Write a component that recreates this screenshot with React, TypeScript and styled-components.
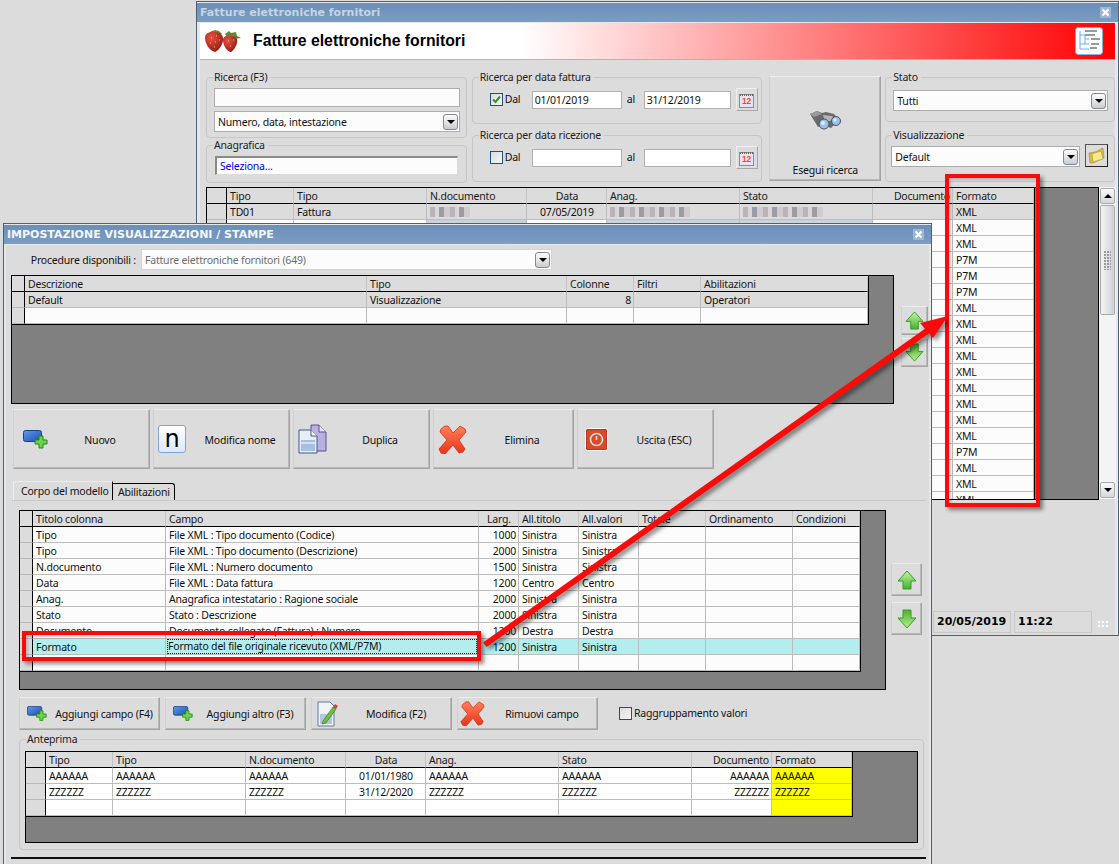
import React from "react";
import styled, { createGlobalStyle } from "styled-components";

const UI_FONT = `"Noto Sans", "Liberation Sans", Arial, sans-serif`;

const GlobalStyle = createGlobalStyle`
  html, body { margin: 0; padding: 0; overflow: hidden; background: #dcdcdc; }
  * { box-sizing: border-box; }
  body { font: 10.5px/15px ${UI_FONT}; letter-spacing: -0.2px; color: #111; }
`;

/* desktop and windows */
const Desktop = styled.div`
  position: relative;
  width: 1119px;
  height: 864px;
  overflow: hidden;
  background: #dcdcdc;
`;

const AppWindow = styled.section<{ $left: number; $top: number; $width: number; $height: number }>`
  position: absolute;
  left: ${(p) => p.$left}px;
  top: ${(p) => p.$top}px;
  width: ${(p) => p.$width}px;
  height: ${(p) => p.$height}px;
  display: flex;
  flex-direction: column;
  background: #e3e8ec;
  border: 1px solid #4f6073;
`;

const TitleBar = styled.header`
  flex: none;
  margin-top: 1px;
  height: 19px;
  padding: 0 7px 0 3px;
  display: flex;
  align-items: center;
  justify-content: space-between;
  background: linear-gradient(180deg, #6a8fb9, #7b9dc2);
`;

const TitleText = styled.span<{ $bright?: boolean }>`
  font: bold 11px/19px "DejaVu Sans", "Liberation Sans", sans-serif;
  letter-spacing: 0;
  color: ${(p) => (p.$bright ? "#f4f7fa" : "#c6d4e2")};
`;

const CloseBox = styled.span`
  width: 11px;
  height: 11px;
  display: flex;
  align-items: center;
  justify-content: center;
  background: #9db6d2;
`;

const WindowBody = styled.div<{ $inset: number }>`
  flex: 1;
  min-height: 0;
  margin: 1px ${(p) => p.$inset}px 0;
  display: flex;
  flex-direction: column;
  background: #dcdcdc;
`;

/* banner of the back window */
const Banner = styled.div`
  flex: none;
  height: 37px;
  padding: 0 12px 0 5px;
  display: flex;
  align-items: center;
  background: linear-gradient(90deg, #fff 0, #fff 35%, #f00 100%);
  border-bottom: 1px solid #b4b4b4;
`;

const BannerTitle = styled.h1`
  margin: 0 0 0 11px;
  flex: 1;
  font: bold 15.8px/20px "Liberation Sans", Arial, sans-serif;
  letter-spacing: 0;
  color: #000;
`;

/* filters */
const Filters = styled.div`
  flex: none;
  margin-top: 10px;
  padding-left: 6px;
  display: flex;
`;

const FilterColumn = styled.div<{ $width: number; $gap?: number; $after?: number }>`
  width: ${(p) => p.$width}px;
  margin-right: ${(p) => p.$after ?? 0}px;
  display: flex;
  flex-direction: column;
  gap: ${(p) => p.$gap ?? 0}px;
`;

const Group = styled.fieldset<{ $h: number }>`
  margin: 0;
  padding: 0;
  min-width: 0;
  height: ${(p) => p.$h}px;
  border: 1px solid #c6c6c6;
  border-radius: 4px;
`;

const GroupLabel = styled.legend`
  margin-left: 6px;
  padding: 0 3px 0 1px;
  line-height: 14px;
  color: #222;
`;

const GroupBody = styled.div<{ $pad: string }>`
  padding: ${(p) => p.$pad};
`;

const TextBox = styled.div<{ $w: number; $h: number; $sunken?: boolean; $blue?: boolean }>`
  width: ${(p) => p.$w}px;
  height: ${(p) => p.$h}px;
  padding: 0 3px;
  line-height: ${(p) => p.$h - 2}px;
  background: #fcfcfc;
  border: 1px solid #adadad;
  color: ${(p) => (p.$blue ? "#0000ee" : "#111")};
  ${(p) => p.$sunken && "border-color: #8a8a8a #dcdcdc #dcdcdc #8a8a8a; border-width: 2px 1px 1px 2px;"}
`;

const Combo = styled.div<{ $w: number; $h: number; $muted?: boolean; $top?: number }>`
  width: ${(p) => p.$w}px;
  height: ${(p) => p.$h}px;
  margin-top: ${(p) => p.$top ?? 0}px;
  padding: 2px 1px 0 3px;
  display: flex;
  align-items: center;
  justify-content: space-between;
  background: #fcfcfc;
  border: 1px solid ${(p) => (p.$muted ? "#d4d4cc" : "#adadad")};
  color: ${(p) => (p.$muted ? "#6c6c6c" : "#111")};
`;

const DropButton = styled.span`
  width: 15px;
  height: 16px;
  margin-top: -2px;
  display: flex;
  align-items: center;
  justify-content: center;
  border: 1px solid #7f8a94;
  border-radius: 3px;
  background: linear-gradient(180deg, #fdfdfd, #c9ccd2);
  &::after {
    content: "";
    border: 4px solid transparent;
    border-top: 4px solid #000;
    border-bottom: 0;
  }
`;

const DateRow = styled.div`
  padding-left: 17px;
  display: flex;
  align-items: center;
  height: 23px;
`;

const CheckBox = styled.span<{ $left?: number }>`
  flex: none;
  width: 13px;
  height: 13px;
  margin-left: ${(p) => p.$left ?? 0}px;
  display: flex;
  align-items: center;
  justify-content: center;
  border: 1px solid #1c5180;
  background: linear-gradient(135deg, #dcdcdc, #f6f6f6);
`;

const Inline = styled.span<{ $w?: number; $pad?: number }>`
  width: ${(p) => (p.$w ? `${p.$w}px` : "auto")};
  padding-left: ${(p) => p.$pad ?? 0}px;
  white-space: nowrap;
`;

const DateBox = styled.div<{ $w: number }>`
  width: ${(p) => p.$w}px;
  height: 18px;
  padding: 0 2px;
  line-height: 16px;
  background: #fff;
  border: 1px solid #b0b0b0;
`;

const CalendarButton = styled.span`
  width: 22px;
  height: 23px;
  margin-left: 5px;
  display: flex;
  align-items: center;
  justify-content: center;
  background: #dcdcdc;
  border: 1px solid;
  border-color: #eee #a8a8a8 #a8a8a8 #eee;
`;

const Raised = styled.button`
  padding: 0;
  font: inherit;
  letter-spacing: inherit;
  color: #111;
  background: #dcdcdc;
  border: 1px solid;
  border-color: #ececec #a4a4a4 #a4a4a4 #d0d0d0;
  box-shadow: inset -1px -1px 0 #b8b8b8;
`;

const SearchButton = styled(Raised)`
  width: 112px;
  height: 105px;
  margin: 6px 4px 0 0;
  padding: 33px 0 2px;
  display: flex;
  flex-direction: column;
  align-items: center;
  justify-content: space-between;
`;

const FolderButton = styled.span`
  width: 23px;
  height: 23px;
  display: flex;
  align-items: center;
  justify-content: center;
  background: #dcdcdc;
  border: 1px solid;
  border-color: #555 #222 #222 #555;
`;

const ComboRow = styled.div`
  display: flex;
  align-items: flex-end;
  gap: 5px;
  padding-top: 2px;
`;

/* grids */
const GridArea = styled.div<{ $indent: number; $top: number }>`
  flex: none;
  margin: ${(p) => p.$top}px 0 0 ${(p) => p.$indent}px;
  display: flex;
  align-items: flex-start;
`;

const GridFrame = styled.div<{ $w: number; $h: number }>`
  flex: none;
  width: ${(p) => p.$w}px;
  height: ${(p) => p.$h}px;
  overflow: hidden;
  background: #808080;
  border: 1px solid #000;
`;

const GridSheet = styled.div`
  width: fit-content;
  border-right: 1px solid #000;
  border-bottom: 1px solid #000;
`;

const GridLine = styled.div<{ $cols: string; $bg: string }>`
  display: grid;
  grid-template-columns: ${(p) => p.$cols};
  height: 16px;
  background: ${(p) => p.$bg};
`;

const Marker = styled.span<{ $head?: boolean }>`
  background: #dcdcdc;
  border-right: 1px solid #000;
  border-bottom: 1px solid ${(p) => (p.$head ? "#000" : "#b8b8b8")};
`;

const HeadCell = styled.span<{ $align?: string }>`
  padding: 0 2px 0 3px;
  overflow: hidden;
  white-space: nowrap;
  line-height: 16px;
  text-align: ${(p) => p.$align ?? "left"};
  background: #dcdcdc;
  color: #1a1a1a;
  border-right: 1px solid #c4c4c4;
  border-bottom: 1px solid #000;
`;

const Cell = styled.span<{ $align?: string; $fill?: string }>`
  padding: 0 2px 0 3px;
  overflow: hidden;
  white-space: nowrap;
  line-height: 16px;
  text-align: ${(p) => p.$align ?? "left"};
  ${(p) => p.$fill && `background: ${p.$fill};`}
  border-right: 1px solid #bcbcbc;
  border-bottom: 1px solid #bcbcbc;
`;

const FocusText = styled.span`
  display: block;
  margin: 0 -1px 0 -2px;
  padding-left: 1px;
  height: 15px;
  line-height: 15px;
  outline: 1px dotted #222;
  outline-offset: -1px;
`;

const RightNumber = styled.span`
  display: block;
  text-align: right;
`;

const Smudge = styled.span<{ $w: number }>`
  display: block;
  width: ${(p) => p.$w}px;
  height: 10px;
  margin-top: 3px;
  background: repeating-linear-gradient(90deg, #b8b4b8 0 5px, #d8d6d8 5px 9px, #9c9ca4 9px 14px, #cfcbcf 14px 20px);
`;

const SmudgeFoot = styled.span`
  display: block;
  height: 16px;
  margin: 0 -3px;
  background: #c9d3dc;
`;

/* back window scrollbar and status */
const ScrollBar = styled.div`
  flex: none;
  width: 17px;
  height: 312px;
  padding: 1px;
  display: flex;
  flex-direction: column;
  align-items: stretch;
  background: #f4f4f4;
`;

const ScrollStep = styled.span<{ $down?: boolean }>`
  flex: none;
  height: 16px;
  display: flex;
  align-items: center;
  justify-content: center;
  border: 1px solid #a8acb0;
  border-radius: 2px;
  background: linear-gradient(180deg, #fbfbfb, #d4d6da);
  margin-top: ${(p) => (p.$down ? "auto" : "0")};
  &::after {
    content: "";
    border: 4px solid transparent;
    ${(p) => (p.$down ? "border-top: 4px solid #000; border-bottom: 0;" : "border-bottom: 4px solid #000; border-top: 0;")}
  }
`;

const ScrollThumb = styled.span`
  flex: none;
  height: 110px;
  margin-top: 1px;
  display: flex;
  align-items: center;
  justify-content: center;
  border: 1px solid #a8acb0;
  border-radius: 2px;
  background: linear-gradient(90deg, #f4f4f6, #cfd1d6);
  &::after {
    content: "";
    width: 7px;
    height: 19px;
    background: radial-gradient(circle at 1px 1px, #9a9a9a 1px, transparent 1px) 0 0 / 3px 3px;
  }
`;

const StatusBar = styled.footer`
  flex: none;
  margin-top: auto;
  padding: 0 7px 2px 0;
  display: flex;
  align-items: center;
  justify-content: flex-end;
  gap: 3px;
`;

const StatusCell = styled.span`
  width: 78px;
  height: 22px;
  padding-left: 3px;
  font: bold 11px/20px "DejaVu Sans", "Liberation Sans", sans-serif;
  letter-spacing: 0;
  border: 1px solid #c8c8c8;
  color: #000;
`;

const Grip = styled.span`
  width: 10px;
  height: 8px;
  margin: 6px 0 0 3px;
  background: radial-gradient(circle at 1px 1px, #fff 1px, transparent 1px) 0 0 / 4px 4px;
`;

/* dialog */
const ProcedureRow = styled.div`
  flex: none;
  margin-top: 4px;
  display: flex;
  align-items: center;
  gap: 5px;
`;

const ProcedureLabel = styled.span`
  width: 130px;
  padding-top: 2px;
  text-align: right;
`;

const ActionRow = styled.div`
  flex: none;
  margin: 5px 0 0 7px;
  display: flex;
  gap: 3px;
`;

const ActionButton = styled(Raised)<{ $w: number; $h: number; $icon: number; $pad: number }>`
  flex: none;
  width: ${(p) => p.$w}px;
  height: ${(p) => p.$h}px;
  padding-left: ${(p) => p.$pad}px;
  display: grid;
  grid-template-columns: ${(p) => p.$icon - p.$pad}px 1fr;
  align-items: center;
  justify-items: start;
  text-align: center;
`;

const ActionLabel = styled.span`
  justify-self: center;
  padding-top: 2px;
  white-space: nowrap;
`;

const NameIcon = styled.span`
  width: 28px;
  height: 28px;
  display: flex;
  align-items: center;
  justify-content: center;
  border: 1px solid #7ea4d8;
  border-radius: 3px;
  background: linear-gradient(180deg, #fff, #dbe8fb);
  font: 24px/26px "DejaVu Sans", sans-serif;
  letter-spacing: 0;
  color: #000;
`;

const MoveStack = styled.div<{ $top: number; $left: number; $gap: number }>`
  flex: none;
  margin: ${(p) => p.$top}px 0 0 ${(p) => p.$left}px;
  display: flex;
  flex-direction: column;
  gap: ${(p) => p.$gap}px;
`;

const MoveButton = styled(Raised)<{ $w: number; $h: number }>`
  width: ${(p) => p.$w}px;
  height: ${(p) => p.$h}px;
  display: flex;
  align-items: center;
  justify-content: center;
`;

const TabStrip = styled.div`
  flex: none;
  height: 20px;
  margin: 12px 3px 0 6px;
  padding-left: 1px;
  display: flex;
  align-items: flex-end;
  border-bottom: 1px solid #c8c8cc;
`;

const Tab = styled.span<{ $active?: boolean; $w: number }>`
  width: ${(p) => p.$w}px;
  height: ${(p) => (p.$active ? 19 : 17)}px;
  padding: ${(p) => (p.$active ? "2px 0 0 7px" : "1px 0 0 5px")};
  white-space: nowrap;
  border-right: 1px solid #000;
  ${(p) =>
    p.$active
      ? "border-top: 1px solid #ececec; border-left: 1px solid #ececec; border-radius: 3px 0 0 0;"
      : "border-top: 1px solid #000; border-radius: 0 3px 0 0;"}
`;

const ToolRow = styled.div`
  flex: none;
  margin: 7px 0 0 13px;
  display: flex;
  align-items: center;
  gap: 5px;
`;

const GroupingLabel = styled.span`
  margin-left: -3px;
`;

const PreviewWrap = styled.div`
  flex: none;
  margin: 2px 0 0 13px;
  width: 905px;
`;

const DialogRule = styled.hr`
  flex: none;
  margin: 7px 3px 0 5px;
  height: 2px;
  border: 0;
  background: #111;
`;

/* annotations on top of the screenshot */
const CalloutBox = styled.div<{ $x: number; $y: number; $w: number; $h: number }>`
  position: absolute;
  left: ${(p) => p.$x}px;
  top: ${(p) => p.$y}px;
  width: ${(p) => p.$w}px;
  height: ${(p) => p.$h}px;
  border: 4px solid #fb0a0a;
  box-shadow: 3px 3px 4px rgba(0, 0, 0, 0.45), inset 2px 2px 3px rgba(0, 0, 0, 0.18);
`;

const CalloutArrow = styled.svg`
  position: absolute;
  left: 0;
  top: 0;
  filter: drop-shadow(3px 3px 2px rgba(0, 0, 0, 0.45));
`;

/* icons */
const Strawberries = () => (
  <svg width="37" height="25" viewBox="0 0 37 25">
    <defs>
      <radialGradient id="berry" cx="0.35" cy="0.3" r="0.8">
        <stop offset="0" stopColor="#e8513f" />
        <stop offset="1" stopColor="#8f1616" />
      </radialGradient>
    </defs>
    <path d="M20 5l4-3 2 2 5-1 1 4 4 2-6 1-6 1z" fill="#5d8a33" />
    <path d="M18 11c0-4 4-5 8-4 5 0 7 3 6 7-1 4-4 8-6 9-4 0-8-7-8-12z" fill="url(#berry)" />
    <path d="M5 3l5-2 4 1 3 3-5 1-6 1z" fill="#5d8a33" />
    <path d="M0 9c0-5 5-7 10-6 6 0 9 4 8 9-1 5-5 10-8 11C5 22 0 15 0 9z" fill="url(#berry)" />
    <path d="M6 9h1M11 7h1M5 14h1M10 13h1M14 11h1M9 18h1M23 12h1M28 11h1M25 17h1" stroke="#f4c070" strokeWidth="1" />
  </svg>
);

const TreeBadge = () => (
  <svg width="28" height="28" viewBox="0 0 28 28">
    <rect x="0.5" y="0.5" width="27" height="27" rx="3" fill="#fbfdff" stroke="#86b2ea" />
    <path d="M5 4v18M5 8h5v9M5 17h5M10 12h4M10 17h4M5 22h9" fill="none" stroke="#6fb0e8" />
    <path d="M10 4h12M10 8h10M16 12h9M16 17h8M15 21h7" stroke="#9a9a9a" strokeWidth="2" />
  </svg>
);

const Binoculars = () => (
  <svg width="32" height="20" viewBox="0 0 32 20">
    <path d="M1 4l7-3 5 2 4-1 8 2 5 6-8 8-9-3-4 2z" fill="#6b6b6e" />
    <path d="M1 4l7-3 5 3-8 3z" fill="#9a9a9c" />
    <path d="M14 5l9 1 3 4-10 2z" fill="#b4b4b6" />
    <circle cx="15" cy="14" r="5" fill="#9ac0ec" stroke="#4a5058" />
    <circle cx="27" cy="11" r="4.5" fill="#9ac0ec" stroke="#4a5058" />
    <circle cx="14" cy="13" r="2" fill="#dcecff" />
    <circle cx="26" cy="10" r="1.7" fill="#dcecff" />
  </svg>
);

const CalendarIcon = () => (
  <svg width="15" height="16" viewBox="0 0 15 16">
    <rect x="0.5" y="2.5" width="14" height="13" fill="#e6e4f4" stroke="#8c88a8" />
    <path d="M1 3h13" stroke="#666" strokeWidth="2" strokeDasharray="1 1" />
    <text x="7.5" y="12" textAnchor="middle" fontFamily="Liberation Sans" fontWeight="bold" fontSize="8.5" fill="#f05010">
      12
    </text>
  </svg>
);

const FolderIcon = () => (
  <svg width="17" height="17" viewBox="0 0 17 17">
    <path d="M1 6l6-1 8-4 1 10-11 5H2z" fill="#d8b848" stroke="#a88a30" strokeWidth="0.6" />
    <path d="M4 7l9-3 2 8-10 3z" fill="#fbe88a" stroke="#b09830" strokeWidth="0.6" />
  </svg>
);

const AddIcon = ({ w = 25 }: { w?: number }) => (
  <svg width={w} height={(w * 19) / 25} viewBox="0 0 25 19">
    <defs>
      <linearGradient id="addBlue" x1="0" y1="0" x2="1" y2="1">
        <stop offset="0" stopColor="#5f9ce8" />
        <stop offset="1" stopColor="#1c4cb0" />
      </linearGradient>
    </defs>
    <rect x="0.5" y="0.5" width="18" height="11" rx="2" fill="url(#addBlue)" stroke="#1c3f8a" />
    <path d="M14 6h4v4h4v4h-4v4h-4v-4h-4v-4h4z" transform="translate(2 0)" fill="#6ed24a" stroke="#1e8a14" />
  </svg>
);

const DuplicateIcon = () => (
  <svg width="29" height="30" viewBox="0 0 29 30">
    <path d="M13 1h8l7 7v19H13z" fill="#b8b0e0" stroke="#5c5090" />
    <path d="M21 1v7h7" fill="#e6e2f6" stroke="#5c5090" />
    <path d="M1 6h12l6 6v17H1z" fill="#e8eef8" stroke="#3a5a8c" />
    <path d="M13 6v6h6" fill="#fff" stroke="#3a5a8c" />
    <rect x="3" y="16" width="14" height="11" fill="#a8bfe0" />
    <path d="M3 19h14" stroke="#fff" />
  </svg>
);

const RedCross = ({ size = 29 }: { size?: number }) => (
  <svg width={size} height={size} viewBox="0 0 29 29">
    <defs>
      <linearGradient id="crossRed" x1="0" y1="0" x2="0" y2="1">
        <stop offset="0" stopColor="#ff8058" />
        <stop offset="1" stopColor="#e83418" />
      </linearGradient>
    </defs>
    <path
      d="M7 1l3 0 5 7 7-7 5 3 1 3-7 8 6 9-2 3-4 1-6-8-8 9-4-1-2-4 8-9-7-8 1-3z"
      fill="url(#crossRed)"
      stroke="#d02c14"
      strokeWidth="0.8"
    />
  </svg>
);

const PowerIcon = () => (
  <svg width="23" height="23" viewBox="0 0 23 23">
    <rect x="0.5" y="0.5" width="22" height="22" rx="2" fill="#d9492c" stroke="#fff" />
    <rect x="1.5" y="1.5" width="20" height="20" rx="1.5" fill="none" stroke="#b8341a" />
    <circle cx="11.5" cy="11.5" r="6" fill="none" stroke="#f6dcd4" strokeWidth="1.6" />
    <path d="M11.5 8v4" stroke="#f6dcd4" strokeWidth="1.6" />
  </svg>
);

const PencilDoc = () => (
  <svg width="21" height="26" viewBox="0 0 21 26">
    <path d="M1 1h12l4 4v20H1z" fill="#f0f4fa" stroke="#5a7aa6" />
    <rect x="3" y="13" width="12" height="10" fill="#b4c6e2" />
    <path d="M6 20L16 6l3 2L9 22l-4 1z" fill="#70c040" stroke="#3d7a20" strokeWidth="0.7" />
    <path d="M16 6l2-3 3 2-2 3z" fill="#e04030" />
  </svg>
);

const MoveArrow = ({ down, size }: { down?: boolean; size: number }) => (
  <svg width={size} height={size} viewBox="0 0 20 20">
    <defs>
      <linearGradient id={down ? "moveDown" : "moveUp"} x1="0" y1="0" x2="0" y2="1">
        <stop offset="0" stopColor={down ? "#50b030" : "#c4f8a0"} />
        <stop offset="1" stopColor={down ? "#b4f090" : "#44b030"} />
      </linearGradient>
    </defs>
    <path
      d={down ? "M6 1h8v8h5L10 19 1 9h5z" : "M10 1l9 10h-5v8H6v-8H1z"}
      fill={`url(#${down ? "moveDown" : "moveUp"})`}
      stroke="#3c9a28"
    />
  </svg>
);

const Tick = () => (
  <svg width="11" height="11" viewBox="0 0 11 11">
    <path d="M2 5.5l2.5 2.5L9 2.5" fill="none" stroke="#2a9a2a" strokeWidth="2" />
  </svg>
);

const CloseMark = () => (
  <svg width="9" height="9" viewBox="0 0 9 9">
    <path d="M1.5 1.5l6 6M7.5 1.5l-6 6" stroke="#fff" strokeWidth="2" />
  </svg>
);

/* data grid */
type Column = { label: string; w: number; align?: string; fill?: string };
type Row = { cells: React.ReactNode[]; bg?: string };

const DataGrid = ({ columns, marker, rows, w, h }: { columns: Column[]; marker: number; rows: Row[]; w: number; h: number }) => {
  const cols = [marker, ...columns.map((c) => c.w)].map((n) => `${n}px`).join(" ");
  return (
    <GridFrame $w={w} $h={h}>
      <GridSheet>
        <GridLine $cols={cols} $bg="#dcdcdc">
          <Marker $head />
          {columns.map((c, i) => (
            <HeadCell key={i} $align={c.align}>
              {c.label}
            </HeadCell>
          ))}
        </GridLine>
        {rows.map((row, r) => (
          <GridLine key={r} $cols={cols} $bg={row.bg ?? "#fcfcfc"}>
            <Marker />
            {columns.map((c, i) => (
              <Cell key={i} $align={c.align} $fill={c.fill}>
                {row.cells[i]}
              </Cell>
            ))}
          </GridLine>
        ))}
      </GridSheet>
    </GridFrame>
  );
};

const resultColumns: Column[] = [
  { label: "Tipo", w: 67 },
  { label: "Tipo", w: 133 },
  { label: "N.documento", w: 100 },
  { label: "Data", w: 80, align: "center" },
  { label: "Anag.", w: 133 },
  { label: "Stato", w: 133 },
  { label: "Documento", w: 80, align: "right" },
  { label: "Formato", w: 81 },
];

const formats = ["XML", "XML", "P7M", "P7M", "P7M", "XML", "XML", "XML", "XML", "XML", "XML", "XML", "XML", "XML", "P7M", "XML", "XML", "XML"];

const resultRows: Row[] = [
  {
    bg: "#dcdcdc",
    cells: ["TD01", "Fattura", <Smudge $w={40} />, "07/05/2019", <Smudge $w={80} />, <Smudge $w={80} />, "", "XML"],
  },
  ...formats.map((f, i) => ({
    cells:
      i === 0
        ? ["", "", <SmudgeFoot />, "", <SmudgeFoot />, <SmudgeFoot />, "", f]
        : ["", "", "", "", "", "", "", f],
  })),
];

const modelColumns: Column[] = [
  { label: "Descrizione", w: 342 },
  { label: "Tipo", w: 200 },
  { label: "Colonne", w: 67 },
  { label: "Filtri", w: 67 },
  { label: "Abilitazioni", w: 167 },
];

const modelRows: Row[] = [
  { bg: "#dcdcdc", cells: ["Default", "Visualizzazione", <RightNumber>8</RightNumber>, "", "Operatori"] },
  { cells: ["", "", "", "", ""] },
];

const fieldColumns: Column[] = [
  { label: "Titolo colonna", w: 133 },
  { label: "Campo", w: 313 },
  { label: "Larg.", w: 40, align: "center" },
  { label: "All.titolo", w: 60 },
  { label: "All.valori", w: 60 },
  { label: "Totale", w: 67 },
  { label: "Ordinamento", w: 87 },
  { label: "Condizioni", w: 67 },
];

const fieldRows: Row[] = [
  ...[
    ["Tipo", "File XML : Tipo documento (Codice)", "1000", "Sinistra", "Sinistra"],
    ["Tipo", "File XML : Tipo documento (Descrizione)", "2000", "Sinistra", "Sinistra"],
    ["N.documento", "File XML : Numero documento", "1500", "Sinistra", "Sinistra"],
    ["Data", "File XML : Data fattura", "1200", "Centro", "Centro"],
    ["Anag.", "Anagrafica intestatario : Ragione sociale", "2000", "Sinistra", "Sinistra"],
    ["Stato", "Stato : Descrizione", "2000", "Sinistra", "Sinistra"],
    ["Documento", "Documento collegato (Fattura) : Numero", "1200", "Destra", "Destra"],
  ].map(([a, b, c, d, e]) => ({ cells: [a, b, <RightNumber>{c}</RightNumber>, d, e, "", "", ""] })),
  {
    bg: "#b2eeee",
    cells: [
      "Formato",
      <FocusText>Formato del file originale ricevuto (XML/P7M)</FocusText>,
      <RightNumber>1200</RightNumber>,
      "Sinistra",
      "Sinistra",
      "",
      "",
      "",
    ],
  },
  { cells: ["", "", "", "", "", "", "", ""] },
];

const previewColumns: Column[] = [
  { label: "Tipo", w: 67 },
  { label: "Tipo", w: 133 },
  { label: "N.documento", w: 100 },
  { label: "Data", w: 80, align: "center" },
  { label: "Anag.", w: 133 },
  { label: "Stato", w: 133 },
  { label: "Documento", w: 80, align: "right" },
  { label: "Formato", w: 80, fill: "#ffff00" },
];

const rowOf = (v: string, d: string): Row => ({ bg: "#fff", cells: [v, v, v, d, v, v, v, v] });
const previewRows: Row[] = [rowOf("AAAAAA", "01/01/1980"), rowOf("ZZZZZZ", "31/12/2020"), rowOf("", "")];

const App: React.FC = () => (
  <Desktop>
    <GlobalStyle />

    <AppWindow $left={196} $top={1} $width={923} $height={635}>
      <TitleBar>
        <TitleText>Fatture elettroniche fornitori</TitleText>
        <CloseBox>
          <CloseMark />
        </CloseBox>
      </TitleBar>
      <WindowBody $inset={3}>
        <Banner>
          <Strawberries />
          <BannerTitle>Fatture elettroniche fornitori</BannerTitle>
          <TreeBadge />
        </Banner>

        <Filters>
          <FilterColumn $width={261} $after={5}>
            <Group $h={68}>
              <GroupLabel>Ricerca (F3)</GroupLabel>
              <GroupBody $pad="4px 0 0 7px">
                <TextBox $w={246} $h={19} />
                <Combo $w={246} $h={21} $top={4}>
                  Numero, data, intestazione
                  <DropButton />
                </Combo>
              </GroupBody>
            </Group>
            <Group $h={45}>
              <GroupLabel>Anagrafica</GroupLabel>
              <GroupBody $pad="4px 0 0 8px">
                <TextBox $w={243} $h={19} $sunken $blue>
                  Seleziona...
                </TextBox>
              </GroupBody>
            </Group>
          </FilterColumn>

          <FilterColumn $width={291} $after={7} $gap={4}>
            <Group $h={54}>
              <GroupLabel>Ricerca per data fattura</GroupLabel>
              <GroupBody $pad="4px 0 0 0">
                <DateRow>
                  <CheckBox>
                    <Tick />
                  </CheckBox>
                  <Inline $w={29} $pad={2}>
                    Dal
                  </Inline>
                  <DateBox $w={90}>01/01/2019</DateBox>
                  <Inline $w={22} $pad={5}>
                    al
                  </Inline>
                  <DateBox $w={87}>31/12/2019</DateBox>
                  <CalendarButton>
                    <CalendarIcon />
                  </CalendarButton>
                </DateRow>
              </GroupBody>
            </Group>
            <Group $h={54}>
              <GroupLabel>Ricerca per data ricezione</GroupLabel>
              <GroupBody $pad="4px 0 0 0">
                <DateRow>
                  <CheckBox />
                  <Inline $w={29} $pad={2}>
                    Dal
                  </Inline>
                  <DateBox $w={90} />
                  <Inline $w={22} $pad={5}>
                    al
                  </Inline>
                  <DateBox $w={87} />
                  <CalendarButton>
                    <CalendarIcon />
                  </CalendarButton>
                </DateRow>
              </GroupBody>
            </Group>
          </FilterColumn>

          <SearchButton>
            <Binoculars />
            <span>Esegui ricerca</span>
          </SearchButton>

          <FilterColumn $width={230} $gap={6}>
            <Group $h={52}>
              <GroupLabel>Stato</GroupLabel>
              <GroupBody $pad="6px 0 0 7px">
                <Combo $w={215} $h={21}>
                  Tutti
                  <DropButton />
                </Combo>
              </GroupBody>
            </Group>
            <Group $h={54}>
              <GroupLabel>Visualizzazione</GroupLabel>
              <GroupBody $pad="0 0 0 5px">
                <ComboRow>
                  <Combo $w={189} $h={21}>
                    Default
                    <DropButton />
                  </Combo>
                  <FolderButton>
                    <FolderIcon />
                  </FolderButton>
                </ComboRow>
              </GroupBody>
            </Group>
          </FilterColumn>
        </Filters>

        <GridArea $indent={6} $top={4}>
          <DataGrid columns={resultColumns} marker={20} rows={resultRows} w={893} h={313} />
          <ScrollBar>
            <ScrollStep />
            <ScrollThumb />
            <ScrollStep $down />
          </ScrollBar>
        </GridArea>

        <StatusBar>
          <StatusCell>20/05/2019</StatusCell>
          <StatusCell>11:22</StatusCell>
          <Grip />
        </StatusBar>
      </WindowBody>
    </AppWindow>

    <AppWindow $left={3} $top={223} $width={929} $height={645}>
      <TitleBar>
        <TitleText $bright>IMPOSTAZIONE VISUALIZZAZIONI / STAMPE</TitleText>
        <CloseBox>
          <CloseMark />
        </CloseBox>
      </TitleBar>
      <WindowBody $inset={2}>
        <ProcedureRow>
          <ProcedureLabel>Procedure disponibili :</ProcedureLabel>
          <Combo $w={411} $h={21} $muted>
            Fatture elettroniche fornitori (649)
            <DropButton />
          </Combo>
        </ProcedureRow>

        <GridArea $indent={5} $top={5}>
          <DataGrid columns={modelColumns} marker={13} rows={modelRows} w={883} h={129} />
          <MoveStack $top={31} $left={7} $gap={3}>
            <MoveButton $w={27} $h={29}>
              <MoveArrow size={19} />
            </MoveButton>
            <MoveButton $w={27} $h={29}>
              <MoveArrow size={19} down />
            </MoveButton>
          </MoveStack>
        </GridArea>

        <ActionRow>
          <ActionButton $w={137} $h={60} $icon={37} $pad={9}>
            <AddIcon />
            <ActionLabel>Nuovo</ActionLabel>
          </ActionButton>
          <ActionButton $w={137} $h={60} $icon={37} $pad={4}>
            <NameIcon>n</NameIcon>
            <ActionLabel>Modifica nome</ActionLabel>
          </ActionButton>
          <ActionButton $w={137} $h={60} $icon={37} $pad={4}>
            <DuplicateIcon />
            <ActionLabel>Duplica</ActionLabel>
          </ActionButton>
          <ActionButton $w={141} $h={60} $icon={37} $pad={4}>
            <RedCross />
            <ActionLabel>Elimina</ActionLabel>
          </ActionButton>
          <ActionButton $w={137} $h={60} $icon={37} $pad={7}>
            <PowerIcon />
            <ActionLabel>Uscita (ESC)</ActionLabel>
          </ActionButton>
        </ActionRow>

        <TabStrip>
          <Tab $active $w={100}>
            Corpo del modello
          </Tab>
          <Tab $w={62}>Abilitazioni</Tab>
        </TabStrip>

        <GridArea $indent={13} $top={9}>
          <DataGrid columns={fieldColumns} marker={13} rows={fieldRows} w={867} h={180} />
          <MoveStack $top={53} $left={5} $gap={6}>
            <MoveButton $w={31} $h={33}>
              <MoveArrow size={20} />
            </MoveButton>
            <MoveButton $w={31} $h={33}>
              <MoveArrow size={20} down />
            </MoveButton>
          </MoveStack>
        </GridArea>

        <ToolRow>
          <ActionButton $w={141} $h={33} $icon={29} $pad={7}>
            <AddIcon w={20} />
            <ActionLabel>Aggiungi campo (F4)</ActionLabel>
          </ActionButton>
          <ActionButton $w={141} $h={33} $icon={29} $pad={7}>
            <AddIcon w={20} />
            <ActionLabel>Aggiungi altro (F3)</ActionLabel>
          </ActionButton>
          <ActionButton $w={141} $h={33} $icon={29} $pad={5}>
            <PencilDoc />
            <ActionLabel>Modifica (F2)</ActionLabel>
          </ActionButton>
          <ActionButton $w={141} $h={33} $icon={29} $pad={2}>
            <RedCross size={25} />
            <ActionLabel>Rimuovi campo</ActionLabel>
          </ActionButton>
          <CheckBox $left={16} />
          <GroupingLabel>Raggruppamento valori</GroupingLabel>
        </ToolRow>

        <PreviewWrap>
          <Group $h={118}>
            <GroupLabel>Anteprima</GroupLabel>
            <GroupBody $pad="5px 0 0 5px">
              <DataGrid columns={previewColumns} marker={20} rows={previewRows} w={893} h={92} />
            </GroupBody>
          </Group>
        </PreviewWrap>

        <DialogRule />
      </WindowBody>
    </AppWindow>

    <CalloutBox $x={945} $y={174} $w={95} $h={333} />
    <CalloutBox $x={22} $y={631} $w={459} $h={30} />
    <CalloutArrow width={1119} height={864} viewBox="0 0 1119 864">
      <path d="M483 642.5L926 328l3.5 5L486.500 647z" fill="#fb0a0a" />
      <path d="M948 316L920 323l13 15z" fill="#fb0a0a" />
    </CalloutArrow>
  </Desktop>
);

export default App;
